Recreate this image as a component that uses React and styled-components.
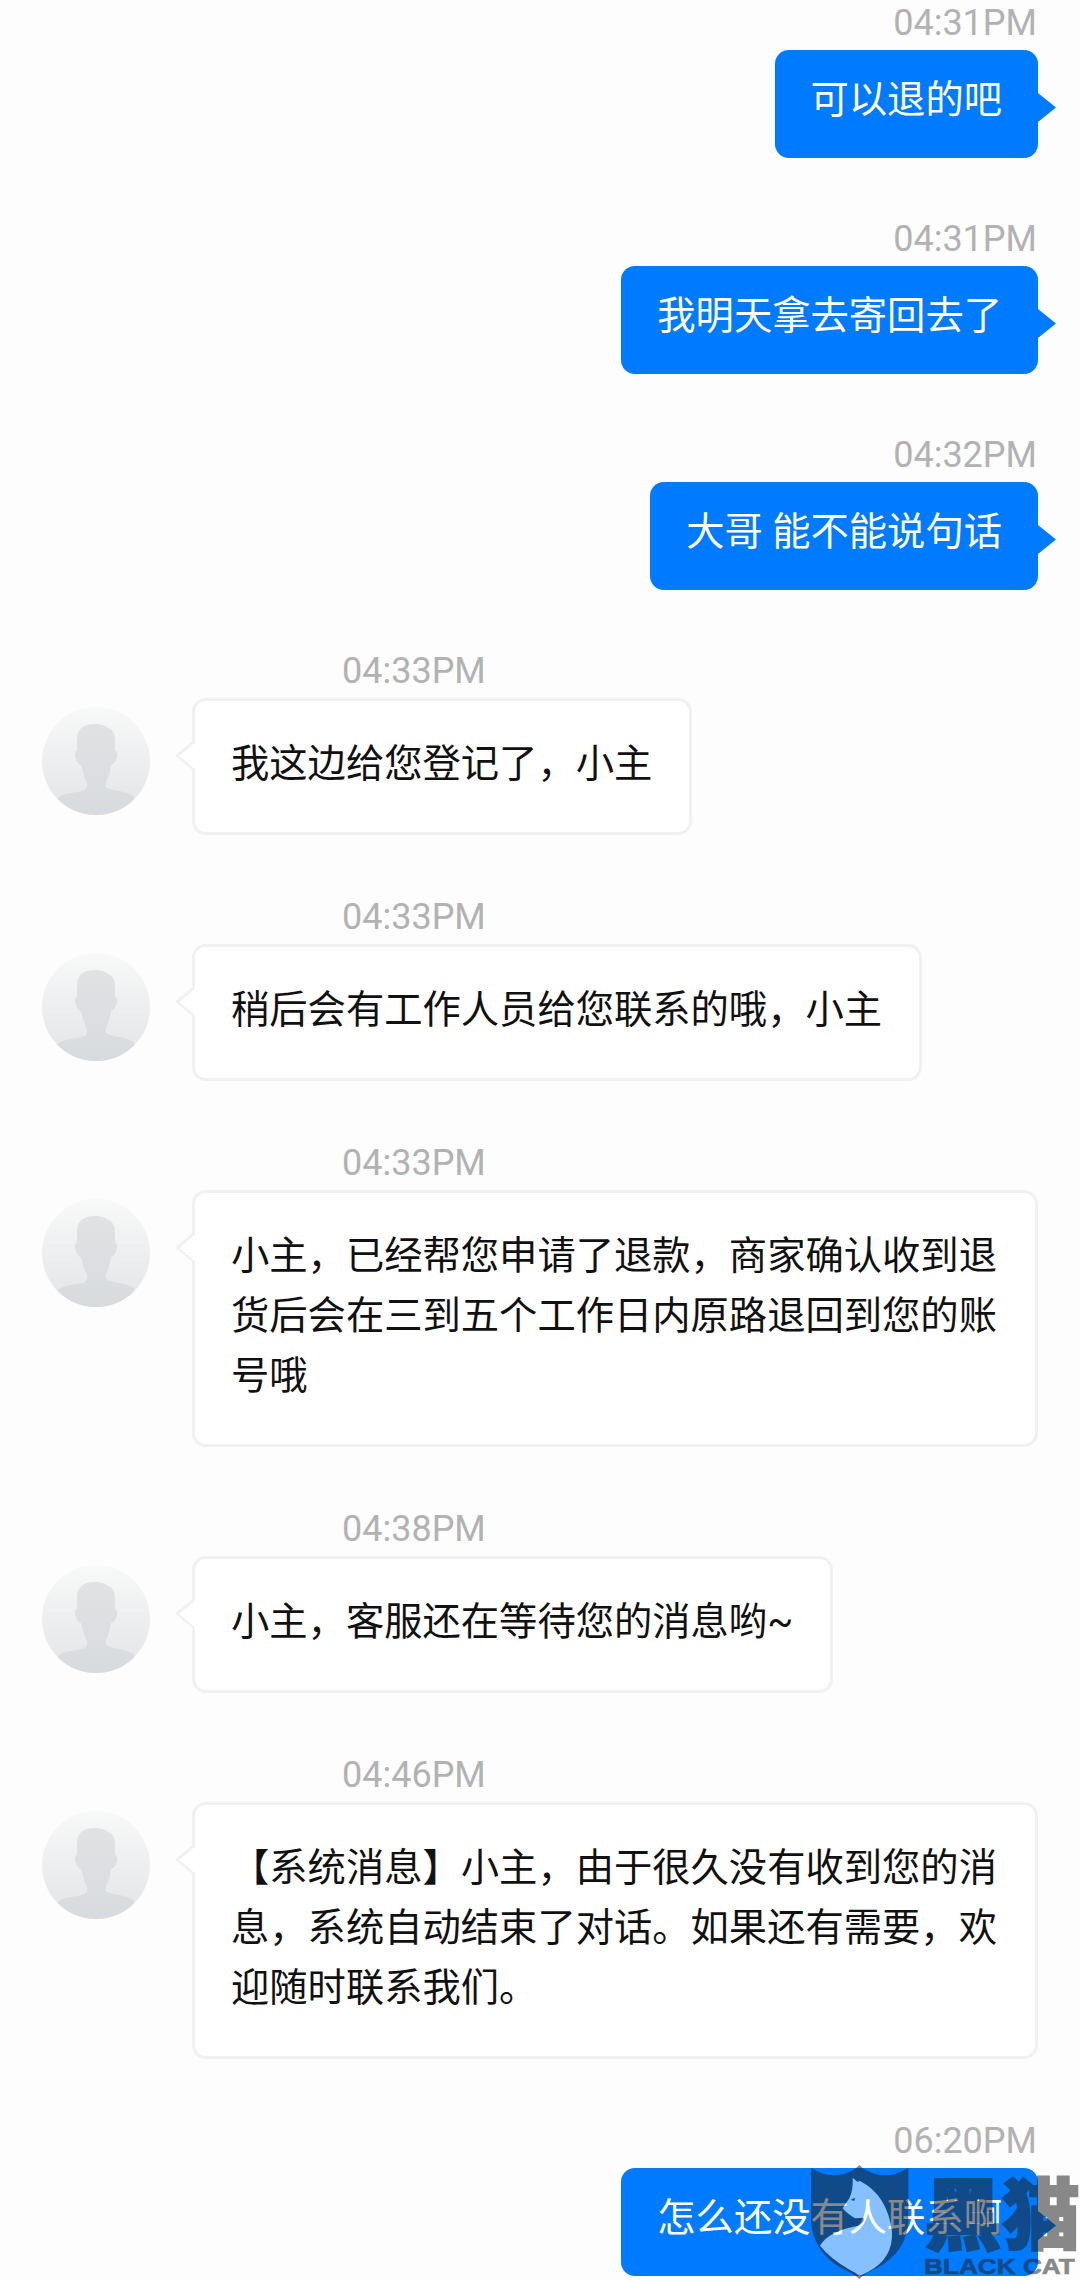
import React from 'react';
import styled, { createGlobalStyle } from 'styled-components';

const GlobalStyle = createGlobalStyle`
  html, body {
    margin: 0;
    padding: 0;
    background: #fdfdfd;
  }
`;

const Page = styled.div`
  position: relative;
  width: 1080px;
  height: 2280px;
  padding-top: 2px;
  box-sizing: border-box;
  overflow: hidden;
  background: #fdfdfd;
  font-family: Roboto, 'Noto Sans CJK SC', sans-serif;
`;

const Message = styled.div`
  display: flex;
  flex-direction: column;
  align-items: ${p => (p.$mine ? 'flex-end' : 'flex-start')};
  margin-bottom: ${p => (p.$mine ? '60px' : '61px')};
  padding: ${p => (p.$mine ? '0 42px 0 0' : '0 42px')};
`;

const Time = styled.div`
  height: 40px;
  margin-bottom: 8px;
  margin-left: ${p => (p.$mine ? '0' : '300px')};
  margin-right: ${p => (p.$mine ? '1px' : '0')};
  font-size: 36px;
  line-height: 43px;
  color: #b2b2b2;
`;

const Row = styled.div`
  display: flex;
  align-items: flex-start;
  gap: 42px;
`;

const Avatar = styled.svg`
  flex: none;
  width: 108px;
  height: 108px;
  margin-top: 9px;
`;

const Bubble = styled.div`
  position: relative;
  box-sizing: border-box;
  font-size: 38.3px;
  line-height: 60px;
  ${p =>
    p.$mine
      ? `
    min-height: 108px;
    padding: 20px 36px 28px;
    border-radius: 14px;
    background: #007aff;
    color: #fff;
    &::after {
      content: '';
      position: absolute;
      left: 100%;
      top: 43px;
      width: 18px;
      height: 29px;
      background: #007aff;
      clip-path: polygon(0 0, 100% 50%, 0 100%);
    }
  `
      : `
    max-width: 846px;
    padding: 33px 37px 38px 36px;
    border: 3px solid #f1f1f1;
    border-radius: 14px;
    background: #fff;
    color: #111;
    &::before,
    &::after {
      content: '';
      position: absolute;
      clip-path: polygon(100% 0, 0 50%, 100% 100%);
    }
    &::before {
      left: -20px;
      top: 38px;
      width: 20px;
      height: 33px;
      background: #f1f1f1;
    }
    &::after {
      left: -16px;
      top: 41px;
      width: 17px;
      height: 28px;
      background: #fff;
    }
  `}
`;

const Watermark = styled.div`
  position: absolute;
  left: 800px;
  top: 2155px;
  display: flex;
  opacity: 0.525;
  pointer-events: none;
`;

const Shield = styled.svg`
  flex: none;
  width: 125px;
  height: 125px;
`;

const Brand = styled.div`
  margin-left: -1px;
  color: #202020;
`;

const BrandCn = styled.div`
  margin-top: 11px;
  height: 91px;
  font-family: 'Noto Sans CJK SC', sans-serif;
  font-size: 78px;
  font-weight: 900;
  line-height: 88px;
  white-space: nowrap;
  -webkit-text-stroke: 2px #202020;
`;

const BrandEn = styled.div`
  font-family: 'Liberation Sans', sans-serif;
  font-size: 22px;
  font-weight: 700;
  line-height: 20px;
  white-space: nowrap;
  transform: scaleX(1.19);
  transform-origin: left center;
  -webkit-text-stroke: 0.6px #202020;
`;

const messages = [
  { time: '04:31PM', text: '可以退的吧', mine: true },
  { time: '04:31PM', text: '我明天拿去寄回去了', mine: true },
  { time: '04:32PM', text: '大哥 能不能说句话', mine: true },
  { time: '04:33PM', text: '我这边给您登记了，小主' },
  { time: '04:33PM', text: '稍后会有工作人员给您联系的哦，小主' },
  {
    time: '04:33PM',
    text: '小主，已经帮您申请了退款，商家确认收到退货后会在三到五个工作日内原路退回到您的账号哦',
  },
  { time: '04:38PM', text: '小主，客服还在等待您的消息哟~' },
  {
    time: '04:46PM',
    text: '【系统消息】小主，由于很久没有收到您的消息，系统自动结束了对话。如果还有需要，欢迎随时联系我们。',
  },
  { time: '06:20PM', text: '怎么还没有人联系啊', mine: true },
];

const AgentAvatar = ({ id }) => (
  <Avatar viewBox="0 0 108 108">
    <defs>
      <linearGradient id={`bg${id}`} x1="0" y1="0" x2="0" y2="1">
        <stop offset="0" stopColor="#f8f9f9" />
        <stop offset="1" stopColor="#e2e4e6" />
      </linearGradient>
      <linearGradient id={`fg${id}`} x1="0" y1="0" x2="0" y2="1">
        <stop offset="0" stopColor="#e0e2e4" />
        <stop offset="1" stopColor="#d8dbde" />
      </linearGradient>
      <clipPath id={`clip${id}`}>
        <circle cx="54" cy="54" r="54" />
      </clipPath>
    </defs>
    <circle cx="54" cy="54" r="54" fill={`url(#bg${id})`} />
    <path
      clipPath={`url(#clip${id})`}
      fill={`url(#fg${id})`}
      d="M53 17C44 17 35 20 35 33L35 44C33 44 32 47 34 52C35 55 37 58 39 58C41 66 43 72 45 76C46 80 44 83 40 84C32 86 22 86 16 91L16 108L92 108L92 89C85 85 76 84 68 82C64 81 63 79 64 75C66 71 68 65 69 58C72 57 74 54 75 50C76 47 75 44 73 44L73 33C73 26 70 22 66 21C63 18 58 17 53 17Z"
    />
  </Avatar>
);

const App = () => (
  <Page>
    <GlobalStyle />
    {messages.map((m, i) => (
      <Message key={i} $mine={m.mine}>
        <Time $mine={m.mine}>{m.time}</Time>
        <Row>
          {!m.mine && <AgentAvatar id={i} />}
          <Bubble $mine={m.mine}>{m.text}</Bubble>
        </Row>
      </Message>
    ))}
    <Watermark>
      <Shield viewBox="0 0 375 375">
        <path
          fill="#202020"
          d="M33 38Q100 82 165 42L178 30L192 42Q258 82 325 38L325 200Q320 290 230 340Q195 355 178 372Q160 355 125 340Q40 290 33 200Z"
        />
        <path
          fill="#fff"
          d="M158 68L172 80L180 78Q262 120 276 230Q280 310 205 350Q190 358 178 362Q165 352 150 345Q90 310 60 272Q85 228 175 212Q196 200 190 188L165 190Q140 175 128 160L148 130Q160 105 158 68Z"
        />
        <path fill="#202020" d="M152 134L166 128L162 138Z" />
      </Shield>
      <Brand>
        <BrandCn>黑猫</BrandCn>
        <BrandEn>BLACK CAT</BrandEn>
      </Brand>
    </Watermark>
  </Page>
);

export default App;
